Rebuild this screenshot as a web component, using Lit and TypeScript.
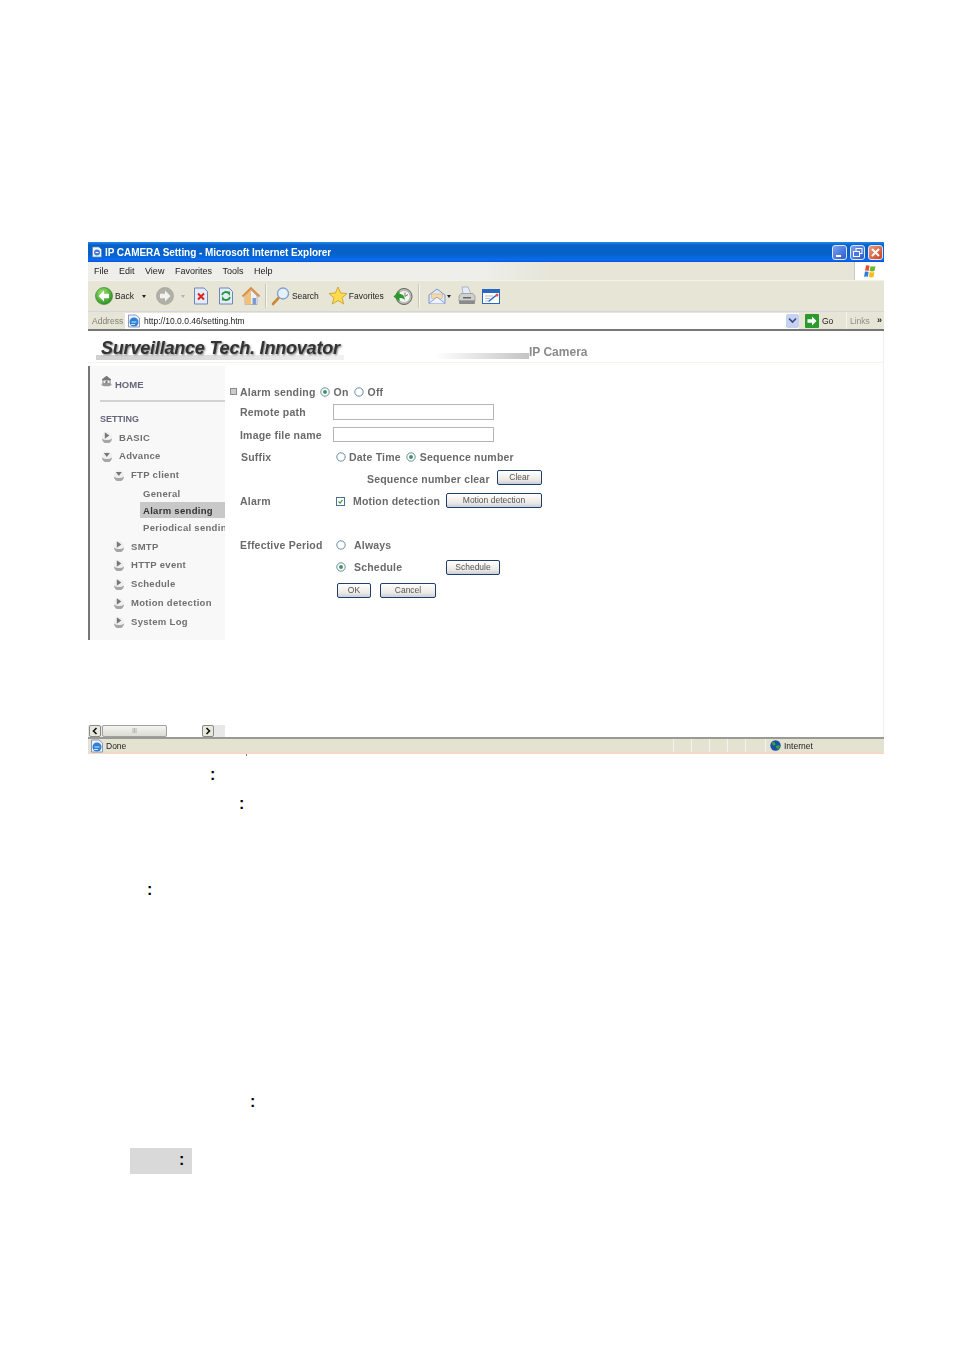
import { LitElement, html, css, svg } from "lit";
import { customElement } from "lit/decorators.js";

const ball = (down: boolean) => html`<svg class="ball" width="12" height="12" viewBox="0 0 12 12">
  <circle cx="6" cy="6" r="5" fill="#f0f0f0"/>
  <path d="M1 7.500 A5 5 0 0 0 11 7.500 A6 3.500 0 0 1 1 7.500Z" fill="#a6a6a6"/>
  ${down ? svg`<path d="M2.800 3H8.800L5.800 7Z" fill="#777"/>` : svg`<path d="M3.800 1.200V7.800L8.300 4.500Z" fill="#777"/>`}
</svg>`;

const radio = (on: boolean) => html`<svg class="radio" width="10" height="10" viewBox="0 0 10 10">
  <circle cx="5" cy="5" r="4.200" fill="#fff" stroke="#5b7f9c" stroke-width=".9"/>
  ${on ? svg`<circle cx="5" cy="5" r="2" fill="#3f9a58"/>` : ""}
</svg>`;

const back = html`<svg width="18" height="18" viewBox="0 0 18 18"><defs><radialGradient id="g" cx=".4" cy=".3" r=".8"><stop offset="0" stop-color="#9be26a"/><stop offset="1" stop-color="#1f8a1c"/></radialGradient></defs><circle cx="9" cy="9" r="8.500" fill="url(#g)" stroke="#2a7a24" stroke-width=".6"/><path d="M9 3.500 3.500 9 9 14.500V11.200h5V6.800H9z" fill="#fff"/></svg>`;
const forward = html`<svg width="18" height="18" viewBox="0 0 18 18"><circle cx="9" cy="9" r="8.500" fill="#b0b0a8" stroke="#9c9c96" stroke-width=".6"/><path d="M9 3.500 14.500 9 9 14.500V11.200H4V6.800h5z" fill="#f2f2ee"/></svg>`;
const stopI = html`<svg width="16" height="18" viewBox="0 0 16 18"><path d="M1.500 1H11l3.500 3.500V17h-13z" fill="#e4ebfa" stroke="#6f86b8"/><path d="M5 6.500l6 6m0-6l-6 6" stroke="#d9261c" stroke-width="2"/></svg>`;
const refresh = html`<svg width="16" height="18" viewBox="0 0 16 18"><path d="M1.500 1H11l3.500 3.500V17h-13z" fill="#e4ebfa" stroke="#6f86b8"/><path d="M4 8a4 4 0 0 1 7-1.500V4.500M12 10a4 4 0 0 1-7 1.500v2" fill="none" stroke="#1f9a32" stroke-width="1.800"/></svg>`;
const home = html`<svg width="20" height="20" viewBox="0 0 20 20"><path d="M4 10l6-6 6 6v8.500H4z" fill="#eef2fb" stroke="#8aa0c8" stroke-width=".7"/><path d="M4 10l6-6v14.500H4z" fill="#f3c078"/><path d="M1.500 10.500 10 2l8.500 8.500" fill="none" stroke="#e08a3a" stroke-width="1.800"/><rect x="11.500" y="12" width="3.500" height="6.500" fill="#7c9bd0"/></svg>`;
const search = html`<svg width="20" height="20" viewBox="0 0 20 20"><path d="M2 18l5.500-6" stroke="#c98a3a" stroke-width="2.600" stroke-linecap="round"/><circle cx="12" cy="7.500" r="5.500" fill="#e4f0fb" stroke="#7f9ec4" stroke-width="1.300"/></svg>`;
const star = html`<svg width="20" height="20" viewBox="0 0 20 20"><path d="M10 1l2.600 6 6.400.5-4.900 4.200 1.600 6.300L10 14.600 4.300 18l1.600-6.300L1 7.500 7.400 7z" fill="#ffdb4d" stroke="#c79a26" stroke-width=".8"/></svg>`;
const history = html`<svg width="20" height="19" viewBox="0 0 20 19"><circle cx="11" cy="9.500" r="8" fill="#b9bcb4" stroke="#666" stroke-width="1"/><circle cx="11" cy="9.500" r="5.600" fill="#f4f4f0"/><path d="M12 5.500v4l3-2" fill="none" stroke="#777" stroke-width="1"/><path d="M.5 9.500 6.500 4v3c3.500 0 5 2 5.500 6.500C11 11.500 9 11 6.500 11v3.500z" fill="#2a9a2a"/></svg>`;
const mail = html`<svg width="18" height="18" viewBox="0 0 18 18"><path d="M1 8l8-6 8 6v8.500H1z" fill="#dfe8fb" stroke="#7f95c8"/><path d="M3.500 7h11v4L9 13.500 3.500 11z" fill="#f6d9a8" stroke="#d0a56a" stroke-width=".5"/><path d="M1 16.500 9 10l8 6.500" fill="#eef3fd" stroke="#7f95c8" stroke-width=".8"/></svg>`;
const printer = html`<svg width="18" height="20" viewBox="0 0 18 20"><path d="M4 1h6l3 7H5z" fill="#e4ebf9" stroke="#8fa0c0" stroke-width=".7"/><path d="M1 10l2-2.500h12L17 10v5H1z" fill="#d0d0d0" stroke="#909090" stroke-width=".7"/><rect x="1" y="14.500" width="16" height="3.500" rx="1" fill="#8a8a8a"/><rect x="5" y="11" width="8" height="1.500" fill="#666"/></svg>`;
const edit = html`<svg width="18" height="15" viewBox="0 0 18 15"><rect x=".5" y=".5" width="17" height="14" fill="#fff" stroke="#2a68c0"/><rect x="1" y="1" width="16" height="3" fill="#2a68c0"/><path d="M3 7h8M3 9.500h5M3 12h3" stroke="#b9b9b9"/><path d="M6.500 12.500 14 6.500" stroke="#2a68c0" stroke-width="1.600"/><circle cx="15" cy="6" r="1.500" fill="#e5533a"/></svg>`;
const ieSmall = html`<svg width="12" height="12" viewBox="0 0 12 12"><path d="M1.500 1H8l2.500 2.500V11h-9z" fill="#f5f7fc" stroke="#6d85b4" stroke-width=".7"/><circle cx="6" cy="6.500" r="3" fill="#3f7fd8"/><path d="M4.500 6.500h3" stroke="#fff"/></svg>`;
const ie = html`<svg width="14" height="14" viewBox="0 0 14 14"><path d="M1.500 1H9l3.500 3v9h-11z" fill="#eef3fb" stroke="#6d85b4" stroke-width=".8"/><circle cx="7" cy="8" r="4.500" fill="#2f7fd6"/><path d="M4.500 8h5M4 10.500h4" stroke="#cfe6fb" stroke-width="1"/></svg>`;
const go = html`<svg width="14" height="14" viewBox="0 0 14 14"><rect width="14" height="14" rx="1" fill="#2a9a2c"/><path d="M7 2.500 11.500 7 7 11.500V8.800H2.500V5.200H7z" fill="#fff"/></svg>`;
const globe = html`<svg width="11" height="11" viewBox="0 0 11 11"><circle cx="5.500" cy="5.500" r="5.200" fill="#1d4fa8"/><path d="M2 2.500c2-1 3 0 3.500 1.500S3.500 6 3 5 1.500 4 2 2.500zM6 6c2-1 3.500-1 4 0-.5 2-1.500 3-2.500 3.500C7 8 5.500 7.500 6 6z" fill="#2fa836"/></svg>`;
const flag = html`<svg width="14" height="15" viewBox="0 0 14 15"><path d="M3 1.500c1.500-.6 2.500-.3 3.500.2L5.700 7C4.500 6.400 3.300 6.300 2 6.800z" fill="#e5502c"/><path d="M7.500 2c1.500.7 3 .7 5 0L11.500 7c-1.800.7-3.300.5-4.700 0z" fill="#6fb62c"/><path d="M1.900 7.800c1.300-.5 2.500-.4 3.700.2L4.800 13c-1.300-.6-2.500-.6-3.800-.1z" fill="#2f7fd6"/><path d="M6.700 8c1.400.6 3 .7 4.700 0l-.8 5c-1.600.6-3.200.5-4.700-.1z" fill="#f7bd1f"/></svg>`;
const homeSmall = html`<svg width="11" height="12" viewBox="0 0 11 12"><path d="M5.500 .8 1 4.200v1h9v-1z" fill="#777"/><rect x="2" y="5" width="7" height="3.500" fill="#eee" stroke="#777" stroke-width=".8"/><ellipse cx="5.500" cy="9.500" rx="5" ry="1.800" fill="#999"/><rect x="4.500" y="5.800" width="2" height="2.400" fill="#777"/></svg>`;
const chevL = html`<svg width="10" height="10" viewBox="0 0 10 10"><path d="M6.500 2 3.500 5l3 3" fill="none" stroke="#111" stroke-width="1.600"/></svg>`;
const chevR = html`<svg width="10" height="10" viewBox="0 0 10 10"><path d="M3.500 2l3 3-3 3" fill="none" stroke="#111" stroke-width="1.600"/></svg>`;

const menu = [
  { label: "BASIC", icon: "closed", cls: "lvl1 h18" },
  { label: "Advance", icon: "open", cls: "lvl1 h19" },
  { label: "FTP client", icon: "open", cls: "lvl2 h19" },
  { label: "General", icon: "", cls: "lvl3 h18" },
  { label: "Alarm sending", icon: "", cls: "lvl3 h16 active" },
  { label: "Periodical sending", icon: "", cls: "lvl3 h19" },
  { label: "SMTP", icon: "closed", cls: "lvl2 h18" },
  { label: "HTTP event", icon: "closed", cls: "lvl2 h19" },
  { label: "Schedule", icon: "closed", cls: "lvl2 h19" },
  { label: "Motion detection", icon: "closed", cls: "lvl2 h19" },
  { label: "System Log", icon: "closed", cls: "lvl2 h19" },
];

@customElement("app-root")
export class AppRoot extends LitElement {
  static styles = css`
    :host { display: block; width: 954px; height: 1350px; background: #fff; overflow: hidden; font-family: "Liberation Sans", Arial, sans-serif; }
    .page { padding: 242px 0 0 88px; }
    .window { width: 796px; filter: blur(.35px); background: #fff; display: flex; flex-direction: column; }
    svg { display: block; flex: none; }

    .title { height: 20px; box-sizing: border-box; display: flex; align-items: center; padding: 0 1px 0 3px; background: linear-gradient(#1f8cf0 0, #0a5fc8 3px, #0562c8 12px, #0a6cf0 18px, #0a50d8 20px); color: #fff; font-size: 10px; font-weight: bold; }
    .title span { margin-left: 2px; flex: 1; letter-spacing: -.06px; }
    .wb { width: 15px; height: 15px; margin-left: 3px; box-sizing: border-box; border: 1px solid #dfe8fb; border-radius: 3px; background: linear-gradient(135deg, #7aa2ee, #2a5cd0); position: relative; }
    .wb.close { background: linear-gradient(135deg, #ec9a80, #d0401c); }
    .wb svg { position: absolute; inset: 0; }

    .menubar { height: 19px; box-sizing: border-box; display: flex; align-items: center; padding-left: 6px; background: linear-gradient(90deg, #eeeeea 0, #eeeeea 50%, #e6e5d8 58%, #e6e5d8 100%); font-size: 9px; color: #222; gap: 10.500px; border-bottom: 1px solid #f4f3ea; }
    .menubar .flagbox { margin-left: auto; width: 29px; height: 18px; background: #fff; border-left: 1px solid #c8c8b8; display: flex; align-items: center; justify-content: center; }

    .toolbar { height: 31px; box-sizing: border-box; display: flex; align-items: center; background: #e6e5d6; padding-left: 7px; font-size: 8.500px; color: #222; border-bottom: 1px solid #d6d3e2; }
    .sep { width: 1px; height: 24px; background: #c9c8b8; border-right: 1px solid #f6f6ee; }
    .arrow { width: 0; height: 0; border: 2.500px solid transparent; border-top: 3px solid #222; border-bottom: 0; }
    .arrow.dim { border-top-color: #b5b5ae; }
    .m1 { margin-left: 1px; } .m2 { margin-left: 2px; } .m4 { margin-left: 4px; } .m5 { margin-left: 5px; } .m6 { margin-left: 6px; } .m7 { margin-left: 7px; } .m8 { margin-left: 8px; } .m9 { margin-left: 9px; } .m10 { margin-left: 10px; }

    .address { height: 17px; box-sizing: border-box; display: flex; align-items: center; background: #e6e5d6; font-size: 8.500px; color: #222; }
    .address .lab { color: #7f7f78; padding-left: 4px; width: 37px; box-sizing: border-box; flex: none; }
    .urlbox { flex: none; width: 674px; height: 16px; background: #fff; display: flex; align-items: center; padding-left: 2px; box-sizing: border-box; }
    .urlbox span { margin-left: 3px; flex: 1; }
    .drop { width: 13px; height: 14px; background: #c5d2f2; display: flex; align-items: center; justify-content: center; border-radius: 2px; }
    .gobox { flex: none; width: 48px; display: flex; align-items: center; padding-left: 6px; box-sizing: border-box; gap: 3px; border-right: 1px solid #f6f6ee; height: 17px; }
    .links { flex: 1; display: flex; justify-content: space-between; padding: 0 2px 0 3px; color: #8f8f88; }
    .links b { color: #222; font-size: 9px; line-height: 8px; }
    .rule { height: 2px; background: #777; }

    .content { height: 406px; box-sizing: border-box; border-right: 1px solid #f0f0f0; display: flex; flex-direction: column; }
    .brand { height: 32px; box-sizing: border-box; display: flex; padding-left: 13px; border-bottom: 1px solid #f6f6e8; position: relative; }
    .logo { font-size: 18px; font-weight: bold; font-style: italic; color: #333; line-height: 35px; letter-spacing: -.2px; text-shadow: 1px 1px 2px #777; background: linear-gradient(90deg, #d0d0d0, #f0f0f0); background-size: 100% 5px; background-repeat: no-repeat; background-position: 0 24px; margin-left: -5px; padding-left: 5px; padding-right: 4px; height: 30px; }
    .fade { position: absolute; left: 347px; top: 22px; width: 94px; height: 6px; background: linear-gradient(90deg, #fff, #c4c4c4); }
    .ipcam { position: absolute; left: 441px; top: 14px; font-size: 12px; font-weight: bold; color: #8a8a8a; }
    .body { flex: 1; display: flex; flex-direction: column; padding-top: 3px; }
    .main { display: flex; height: 274px; }

    .side { width: 137px; flex: none; box-sizing: border-box; border-left: 2px solid #777; background: #f8f8f8; font-size: 9.500px; font-weight: bold; color: #707070; overflow: hidden; padding-top: 9px; }
    .home { height: 18px; display: flex; align-items: center; padding-left: 11px; font-size: 9.500px; gap: 3px; color: #66667a; }
    .home svg { margin-top: -6px; }
    .hr { height: 2px; background: #d2d2d2; margin: 7px 0 8px 10px; }
    .setting { height: 18px; display: flex; align-items: center; padding-left: 10px; font-size: 9px; color: #66667a; }
    .item { display: flex; align-items: center; white-space: nowrap; letter-spacing: .3px; }
    .h16 { height: 16px; } .h18 { height: 18px; } .h19 { height: 19px; }
    .lvl1 { padding-left: 11px; } .lvl2 { padding-left: 23px; }
    .lvl3 { margin-left: 50px; padding-left: 3px; }
    .item .ball { margin-right: 6px; }
    .item.active { background: #c8c8c8; color: #333; }

    .form { flex: 1; padding: 15px 0 0 5px; font-size: 10.500px; font-weight: bold; color: #6a6a6a; letter-spacing: .2px; }
    .row { height: 22px; display: flex; align-items: center; white-space: nowrap; }
    .row.r19 { height: 19px; }
    .row.r23 { height: 23px; }
    .row.r24 { height: 24px; }
    .row > span, .lab1 { padding-top: 2px; box-sizing: border-box; }
    .lab1 { width: 103px; padding-left: 10px; flex: none; }
    .lab1.flat { padding-top: 0; }
    .lab1.sfx { padding-left: 11px; }
    .mini { width: 7px; height: 7px; background: #ccc; border: 1px solid #8a8a8a; box-sizing: border-box; margin: 2px 3px 0 0; }
    .radio { margin: 2px 0 0 3px; }
    .t3 { margin-left: 3px; } .t4 { margin-left: 4px; } .t8 { margin-left: 8px; }
    .gap1 { margin-left: 1px; padding: 0; } .gap2 { margin-left: 2px; padding: 0; }
    .input { width: 161px; height: 16px; box-sizing: border-box; border: 1px solid #b5b5b5; background: #fff; }
    .input.short { height: 15px; }
    .seq { margin-left: 137px; width: 130px; flex: none; }
    .check { width: 9px; height: 9px; margin: 2px 0 0 3px; box-sizing: border-box; border: 1px solid #4f6f8c; background: #fff; }
    .fixed { width: 85px; flex: none; }
    .btn { height: 15px; box-sizing: border-box; border: 1px solid #1f3f6a; border-radius: 2px; background: linear-gradient(#fff, #ece9e2 70%, #c8cde0); color: #555; font-size: 8.500px; font-weight: normal; letter-spacing: 0; display: flex; align-items: center; justify-content: center; }
    .w45 { width: 45px; margin-top: -2px; } .w96 { width: 96px; margin-left: 8px; } .w54 { width: 54px; margin: 2px 0 0 7px; } .w34 { width: 34px; } .w56 { width: 56px; margin-left: 9px; }
    .okrow { padding: 2px 0 0 107px; box-sizing: border-box; }

    .scroll { margin-top: 85px; width: 137px; height: 12px; display: flex; background: #e8e8e8; padding-left: 1px; box-sizing: border-box; }
    .sb { width: 12px; height: 12px; box-sizing: border-box; background: #e9e8de; border: 1px solid #8a8a8a; border-radius: 2px; }
    .thumb { width: 65px; height: 12px; margin-left: 1px; box-sizing: border-box; border: 1px solid #a0a0a0; border-radius: 2px; background: linear-gradient(#f4f4f2, #dcdcd4); color: #888; font-size: 6px; line-height: 9px; text-align: center; }
    .track { width: 35px; background: #fff; }

    .status { height: 17px; box-sizing: border-box; display: flex; align-items: center; background: #e4e3d2; border-top: 2px solid #9a9a94; border-bottom: 2px solid #f6d8c8; font-size: 8.500px; color: #222; padding-left: 2px; }
    .status .done { margin-left: 2px; width: 567px; }
    .status i { width: 18px; height: 13px; border-left: 1px solid #f4f4ea; box-sizing: border-box; }
    .status .zone { margin-left: 2px; display: flex; align-items: center; gap: 3px; border-left: 1px solid #f4f4ea; padding-left: 4px; height: 13px; }

    .notes { font-size: 16px; font-weight: bold; color: #000; line-height: 22px; }
    .tick { width: 1px; height: 2px; margin-left: 158px; background: #777; }
    .n { height: 22px; }
    .n1 { margin: 8px 0 0 122px; }
    .n2 { margin: 7px 0 0 151px; }
    .n3 { margin: 64px 0 0 59px; }
    .n4 { margin: 190px 0 0 162px; }
    .box { margin: 35px 0 0 42px; width: 62px; height: 26px; background: #d9d9d9; line-height: 24px; box-sizing: border-box; padding-left: 49px; }
  `;

  render() {
    return html`<div class="page">
      <div class="window">
        <div class="title">${ieSmall}<span>IP CAMERA Setting - Microsoft Internet Explorer</span>
          <div class="wb"><svg width="13" height="13"><rect x="3" y="9" width="5" height="2" fill="#fff"/></svg></div>
          <div class="wb"><svg width="13" height="13"><rect x="5" y="2.500" width="6" height="5" fill="none" stroke="#fff"/><rect x="2.500" y="5.500" width="6" height="5" fill="#4a78e0" stroke="#fff"/></svg></div>
          <div class="wb close"><svg width="13" height="13"><path d="M3 3l7 7m0-7l-7 7" stroke="#fff" stroke-width="2"/></svg></div>
        </div>
        <div class="menubar"><span>File</span><span>Edit</span><span>View</span><span>Favorites</span><span>Tools</span><span>Help</span><div class="flagbox">${flag}</div></div>
        <div class="toolbar">
          ${back}<span class="m2">Back</span><div class="arrow m8"></div>
          <div class="m10">${forward}</div><div class="arrow dim m7"></div>
          <div class="m8">${stopI}</div><div class="m9">${refresh}</div><div class="m7">${home}</div>
          <div class="sep m4"></div>
          <div class="m4">${search}</div><span class="m1">Search</span>
          <div class="m9">${star}</div><span class="m1">Favorites</span>
          <div class="m9">${history}</div>
          <div class="sep m5"></div>
          <div class="m8">${mail}</div><div class="arrow m1"></div>
          <div class="m7">${printer}</div><div class="m6">${edit}</div>
        </div>
        <div class="address">
          <div class="lab">Address</div>
          <div class="urlbox">${ie}<span>http://10.0.0.46/setting.htm</span>
            <div class="drop"><svg width="9" height="7" viewBox="0 0 9 7"><path d="M1 1.500l3.500 3.500L8 1.500" fill="none" stroke="#3a4a7a" stroke-width="1.600"/></svg></div></div>
          <div class="gobox">${go}<span>Go</span></div>
          <div class="links"><span>Links</span><b>»</b></div>
        </div>
        <div class="rule"></div>
        <div class="content">
          <div class="brand"><div class="logo">Surveillance Tech. Innovator</div><div class="fade"></div><div class="ipcam">IP Camera</div></div>
          <div class="body">
            <div class="main">
              <div class="side">
                <div class="home">${homeSmall}<span>HOME</span></div>
                <div class="hr"></div>
                <div class="setting">SETTING</div>
                ${menu.map((m) => html`<div class="item ${m.cls}">${m.icon ? ball(m.icon === "open") : ""}<span>${m.label}</span></div>`)}
              </div>
              <div class="form">
                <div class="row r19"><div class="mini"></div><span>Alarm sending</span><span class="gap1"></span>${radio(true)}<span class="t4">On</span><span class="gap2"></span>${radio(false)}<span class="t4">Off</span></div>
                <div class="row r23"><div class="lab1 flat">Remote path</div><div class="input"></div></div>
                <div class="row"><div class="lab1">Image file name</div><div class="input short"></div></div>
                <div class="row"><div class="lab1 sfx">Suffix</div>${radio(false)}<span class="t3">Date Time</span><span class="gap2"></span>${radio(true)}<span class="t4">Sequence number</span></div>
                <div class="row"><span class="seq">Sequence number clear</span><div class="btn w45">Clear</div></div>
                <div class="row"><div class="lab1">Alarm</div><svg class="check" viewBox="0 0 9 9"><path d="M2 4.500l2 2 3-4" fill="none" stroke="#2f9a3a" stroke-width="1.400"/></svg><span class="t8 fixed">Motion detection</span><div class="btn w96">Motion detection</div></div>
                <div class="row"></div>
                <div class="row"><div class="lab1">Effective Period</div>${radio(false)}<span class="t8">Always</span></div>
                <div class="row"><div class="lab1"></div>${radio(true)}<span class="t8 fixed">Schedule</span><div class="btn w54">Schedule</div></div>
                <div class="row r24 okrow"><div class="btn w34">OK</div><div class="btn w56">Cancel</div></div>
              </div>
            </div>
            <div class="scroll"><div class="sb">${chevL}</div><div class="thumb">|||</div><div class="track"></div><div class="sb">${chevR}</div></div>
          </div>
        </div>
        <div class="status">${ie}<span class="done">Done</span><i></i><i></i><i></i><i></i><i></i><div class="zone">${globe}<span>Internet</span></div></div>
      </div>
      <div class="notes">
        <div class="tick"></div>
        <div class="n n1">:</div>
        <div class="n n2">:</div>
        <div class="n n3">:</div>
        <div class="n n4">:</div>
        <div class="box">:</div>
      </div>
    </div>`;
  }
}
